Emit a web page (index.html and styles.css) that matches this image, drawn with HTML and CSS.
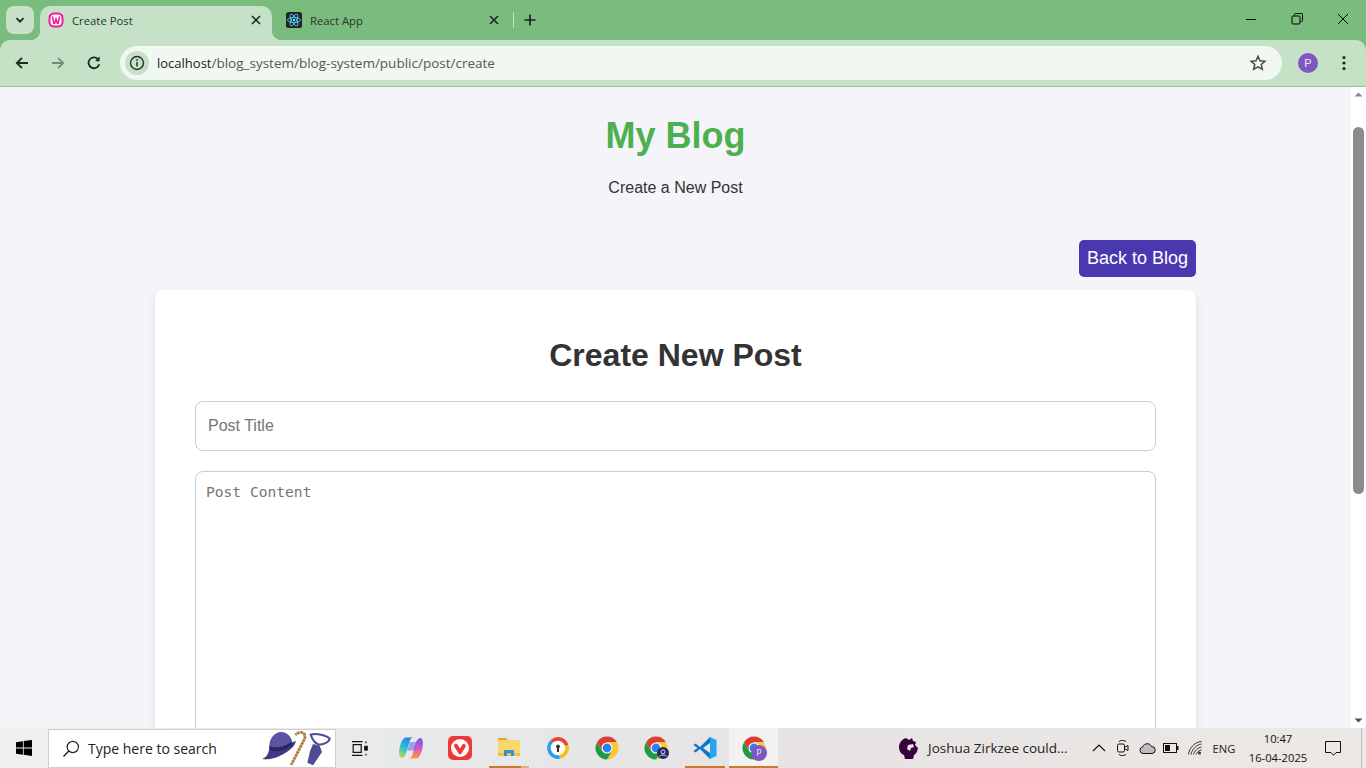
FILE: index.html
```html
<!doctype html>
<html lang="en">
<head>
	<meta charset="utf-8">
	<title>Create Post</title>
	<link rel="stylesheet" href="styles.css">
</head>
<body>
<div class="browser">
	<!-- tabs -->
	<div class="tabstrip">
		<div class="tab-search">
			<svg width="12" height="12" viewBox="0 0 12 12"><path d="M2.5 4.2 6 7.7l3.5-3.5" fill="none" stroke="#1f1f1f" stroke-width="1.7"/></svg>
		</div>
		<div class="tab tab-active">
			<svg class="favicon" width="16" height="16" viewBox="0 0 16 16"><rect x="0.5" y="0.5" width="15" height="15" rx="5.5" fill="#f0189c"/><rect x="2.5" y="2.5" width="11" height="11" rx="3.5" fill="#fff"/><path d="M4.4 4.5 5.8 11.2h.9L8 6.8l1.3 4.4h.9l1.4-6.7" fill="none" stroke="#f0189c" stroke-width="1.5"/></svg>
			<span class="tab-title">Create Post</span>
			<svg class="tab-close" width="10" height="10" viewBox="0 0 10 10"><path d="M1 1l8 8M9 1l-8 8" stroke="#1f1f1f" stroke-width="1.5"/></svg>
		</div>
		<div class="tab tab-other">
			<svg class="favicon" width="16" height="16" viewBox="0 0 16 16"><rect width="16" height="16" rx="2.5" fill="#20232a"/><g fill="none" stroke="#61dafb" stroke-width=".8"><ellipse cx="8" cy="8" rx="6.5" ry="2.6"/><ellipse cx="8" cy="8" rx="6.5" ry="2.6" transform="rotate(60 8 8)"/><ellipse cx="8" cy="8" rx="6.5" ry="2.6" transform="rotate(120 8 8)"/></g><circle cx="8" cy="8" r="1.3" fill="#61dafb"/></svg>
			<span class="tab-title">React App</span>
			<svg class="tab-close" width="10" height="10" viewBox="0 0 10 10"><path d="M1 1l8 8M9 1l-8 8" stroke="#1f1f1f" stroke-width="1.5"/></svg>
		</div>
		<div class="tab-sep"></div>
		<svg class="new-tab" width="12" height="12" viewBox="0 0 12 12"><path d="M6 .5v11M.5 6h11" stroke="#1f1f1f" stroke-width="1.7"/></svg>
		<div class="win-controls">
			<div class="win-btn"><svg width="12" height="12" viewBox="0 0 12 12"><path d="M1 6.5h10" stroke="#000" stroke-width="1"/></svg></div>
			<div class="win-btn"><svg width="12" height="12" viewBox="0 0 12 12"><path d="M3.5 2.500V1.500a1 1 0 0 1 1-1h6a1 1 0 0 1 1 1v6a1 1 0 0 1-1 1H9.5" fill="none" stroke="#000"/><rect x="1" y="3" width="8" height="8" rx="1" fill="none" stroke="#000"/></svg></div>
			<div class="win-btn"><svg width="12" height="12" viewBox="0 0 12 12"><path d="M1 1l10 10M11 1L1 11" stroke="#000" stroke-width="1"/></svg></div>
		</div>
	</div>

	<!-- address bar -->
	<div class="toolbar">
		<svg class="nav-icon" width="16" height="16" viewBox="0 0 16 16"><path d="M14 8H3M8 2.8 2.8 8 8 13.2" fill="none" stroke="#1f2a1f" stroke-width="1.8"/></svg>
		<svg class="nav-icon" width="16" height="16" viewBox="0 0 16 16"><path d="M2 8h11M8 2.8 13.2 8 8 13.2" fill="none" stroke="#76897a" stroke-width="1.8"/></svg>
		<svg class="nav-icon" width="16" height="16" viewBox="0 0 16 16"><path d="M13.2 9.2A5.4 5.4 0 1 1 12 4.2" fill="none" stroke="#1f2a1f" stroke-width="1.8"/><path d="M13.6 1.6v4.6H9z" fill="#1f2a1f"/></svg>
		<div class="omnibox">
			<div class="site-info">
				<svg width="16" height="16" viewBox="0 0 16 16"><circle cx="8" cy="8" r="6.5" fill="none" stroke="#2b2f2b" stroke-width="1.4"/><path d="M8 7v4.400" stroke="#2b2f2b" stroke-width="1.5"/><circle cx="8" cy="4.9" r=".95" fill="#2b2f2b"/></svg>
			</div>
			<div class="url"><span class="url-host">localhost</span>/blog_system/blog-system/public/post/create</div>
			<svg class="star" width="18" height="18" viewBox="0 0 18 18"><path d="M9 2.3l2 4.500 4.900.5-3.700 3.200 1.100 4.800L9 12.800l-4.300 2.500 1.100-4.800L2.100 7.300 7 6.800z" fill="none" stroke="#474c47" stroke-width="1.5"/></svg>
		</div>
		<div class="avatar">P</div>
		<svg class="menu-dots" width="4" height="16" viewBox="0 0 4 16"><circle cx="2" cy="2.5" r="1.6" fill="#1f2a1f"/><circle cx="2" cy="8" r="1.6" fill="#1f2a1f"/><circle cx="2" cy="13.5" r="1.6" fill="#1f2a1f"/></svg>
	</div>

	<div class="viewport">
		<div class="page">
			<header class="site-header">
				<h1>My Blog</h1>
				<p>Create a New Post</p>
			</header>
			<div class="container">
				<div class="actions"><a class="back-btn" href="#">Back to Blog</a></div>
				<div class="card">
					<h2>Create New Post</h2>
					<form>
						<input type="text" class="field" placeholder="Post Title">
						<textarea class="field field-content" placeholder="Post Content"></textarea>
					</form>
				</div>
			</div>
		</div>
		<div class="scrollbar">
			<svg class="sb-arrow" width="15" height="15" viewBox="0 0 15 15"><path d="M3.5 9.5 7.5 5.5l4 4z" fill="#8a8a8a"/></svg>
			<div class="sb-track"><div class="sb-thumb"></div></div>
			<svg class="sb-arrow" width="15" height="15" viewBox="0 0 15 15"><path d="M3.5 5.5 7.5 9.5l4-4z" fill="#505050"/></svg>
		</div>
	</div>

	<!-- windows taskbar -->
	<div class="taskbar">
		<div class="start">
			<svg width="16" height="16" viewBox="0 0 16 16" fill="#000"><path d="M0 2.3 6.900 1.200v6.300H0zM7.700 1.100 16 0v7.500H7.700zM0 8.400h6.900v6.400L0 13.700zM7.700 8.400H16V16l-8.300-1.200z"/></svg>
		</div>
		<div class="search">
			<svg width="18" height="18" viewBox="0 0 18 18"><circle cx="10.8" cy="7" r="5.6" fill="none" stroke="#222" stroke-width="1.2"/><path d="M6.8 11 1.500 16.500" stroke="#222" stroke-width="1.4"/></svg>
			<span class="search-text">Type here to search</span>
			<svg class="search-art" width="77" height="37" viewBox="0 6 231 111">
				<path d="M34 66C30 30 52 10 72 12c20 2 32 20 33 42-22 18-50 22-71 12z" fill="#5b55a5"/>
				<path d="M13 92c15-2 20-22 22-34 17 8 44 2 64-12l14-8c2 20-42 48-73 54-10 2-22 3-27 0z" fill="#3f3a85"/>
				<path d="M35 54c17 8 44 3 65-12l3 9C82 68 55 74 35 65z" fill="#2b2860"/>
				<path d="M100 110 140 32C144 18 132 4 112 20" fill="none" stroke="#cf9e60" stroke-width="8"/>
				<path d="M100 110 140 32C144 18 132 4 112 20" fill="none" stroke="#8f6330" stroke-width="8" stroke-dasharray="3 7"/>
				<path d="M158 20c17-5 47 2 57 12-3 12-20 18-33 18-12-5-20-18-24-30z" fill="none" stroke="#4f4a96" stroke-width="6"/>
				<path d="M165 48l20 5 7 19-27 40-17-8 8-34z" fill="#4f4a96"/>
			</svg>
		</div>
		<div class="task-icons">
			<div class="task-item">
				<svg class="task-view" width="16" height="15" viewBox="0 0 16 15" fill="none" stroke="#111" stroke-width="1.2"><path d="M0 .6h10.500M0 14.400h10.500"/><rect x="1.2" y="3.6" width="8" height="7.800"/><path d="M14 .5v1.800M14 12.700v1.800"/><rect x="12.8" y="5.4" width="2.4" height="3.6" fill="#111"/></svg>
			</div>
			<div class="task-item">
				<svg width="24" height="22" viewBox="0 0 24 22">
					<defs>
						<linearGradient id="cp-left" x1="0.7" y1="0" x2="0.2" y2="1"><stop offset="0" stop-color="#1f7ff0"/><stop offset=".55" stop-color="#2fc2d0"/><stop offset="1" stop-color="#b8dc45"/></linearGradient>
						<linearGradient id="cp-right" x1="0.6" y1="0" x2="0.4" y2="1"><stop offset="0" stop-color="#6f5cf0"/><stop offset=".5" stop-color="#e455b8"/><stop offset="1" stop-color="#f8a13c"/></linearGradient>
					</defs>
					<path d="M7 .5h8c-2 0-3.500 1-4.200 3.200L7.500 15C6.500 18.500 5 21 2.800 21 1 21 0 19 0 15.500 0 11 1.500 6.500 3 3.800 4 1.800 5.300.5 7 .5z" fill="url(#cp-left)"/>
					<path d="M17 21.500H9c2 0 3.500-1 4.200-3.200L16.500 7C17.500 3.500 19 1 21.200 1 23 1 24 3 24 6.500 24 11 22.500 15.500 21 18.200 20 20.200 18.700 21.500 17 21.500z" fill="url(#cp-right)"/>
					<path d="M10.800 5 8.300 13.500h8L18 5z" fill="#5a62e8" opacity=".55"/>
				</svg>
			</div>
			<div class="task-item">
				<svg width="24" height="24" viewBox="0 0 24 24"><rect width="24" height="24" rx="5" fill="#ef3939"/><circle cx="12" cy="12" r="9" fill="#fff"/><path d="M6.500 8.300c1-1 2.500-.8 3.200.4L12 12.600l1.600-2.900c.5-1 1.200-1.700 2.300-1.700 1.500 0 2.400 1.700 1.600 3l-4.300 6.700c-.6 1-1.800 1-2.400 0L6.400 11c-.5-.9-.6-2 .1-2.700z" fill="#ef3939"/></svg>
			</div>
			<div class="task-item task-files task-running">
				<svg width="22" height="20" viewBox="0 0 22 20"><path d="M0 1a1 1 0 0 1 1-1h7l2 2h-10z" fill="#e8a92c"/><rect y="2" width="22" height="15" fill="#f9d769"/><rect y="15" width="22" height="3" fill="#f0c04d"/><path d="M7 12h8a1 1 0 0 1 1 1v5h-3v-3H9v3H6v-5a1 1 0 0 1 1-1z" fill="#2f8fdc"/></svg>
			</div>
			<div class="task-item">
				<svg width="24" height="24" viewBox="0 0 24 24"><circle cx="12" cy="12" r="11" fill="#fff"/><path d="M12 1a11 11 0 0 1 10.500 8l-3.500 1A7.500 7.500 0 0 0 7 6.500L4.500 4A11 11 0 0 1 12 1z" fill="#ea4335"/><path d="M22.500 9A11 11 0 0 1 14 22.800l-1-3.500A7.500 7.500 0 0 0 19 10z" fill="#f9bc15"/><path d="M4.500 4A11 11 0 0 0 14 22.800l-1-3.500A7.500 7.500 0 0 1 7 6.500z" fill="#2b9fe8"/><path d="M12 8.500a2 2 0 0 1 1 3.700V16h-2v-3.800a2 2 0 0 1 1-3.700z" fill="#333"/></svg>
			</div>
			<div class="task-item">
				<svg width="24" height="24" viewBox="0 0 24 24"><use href="#chrome-logo"/></svg>
			</div>
			<div class="task-item">
				<svg width="24" height="24" viewBox="0 0 24 24"><use href="#chrome-logo"/></svg>
				<svg class="task-badge" width="12" height="12" viewBox="0 0 12 12"><circle cx="6" cy="6" r="6" fill="#25265e"/><circle cx="6" cy="4.800" r="2" fill="none" stroke="#cfd3f5" stroke-width="1"/><path d="M2.500 9.500c1-2 6-2 7 0" fill="none" stroke="#cfd3f5" stroke-width="1"/></svg>
			</div>
			<div class="task-item task-running">
				<svg width="24" height="24" viewBox="0 0 24 24"><path d="M17 1 23.500 4v16L17 23z" fill="#23a5f0"/><path d="M17 1 7 11 2.500 7.500.5 9 4.500 12 .5 15l2 1.500L7 13 17 23v-6L10 12l7-5z" fill="#0a78c7"/></svg>
			</div>
			<div class="task-item task-active task-running">
				<svg width="24" height="24" viewBox="0 0 24 24"><use href="#chrome-logo"/></svg>
				<div class="task-avatar">P</div>
			</div>
		</div>
		<div class="news">
			<svg width="20" height="23" viewBox="0 0 20 23"><path d="M7 1l3 2 3-2 1 3 3 1-1 3 3 3c-1 4-2 6-4 7l-1 4H6l-1-4c-3-1-5-4-5-8s3-8 7-9z" fill="#38003c"/><path d="M9 8l5-1 1 3-3 1-1 3-3-2z" fill="#e8e4ea"/></svg>
			<span>Joshua Zirkzee could...</span>
		</div>
		<div class="tray">
			<div class="tray-icon"><svg width="14" height="8" viewBox="0 0 14 8"><path d="M1 7l6-6 6 6" fill="none" stroke="#111" stroke-width="1.2"/></svg></div>
			<div class="tray-icon"><svg width="12" height="18" viewBox="0 0 12 18" fill="none" stroke="#111" stroke-width="1"><path d="M2 2.500c2-1.500 5-1.500 7 0M2 15.500c2 1.500 5 1.500 7 0"/><rect x=".5" y="5" width="7" height="8" rx="1.5"/><path d="M8 8l3-1.500v5L8 10"/></svg></div>
			<div class="tray-icon"><svg width="17" height="12" viewBox="0 0 17 12"><path d="M4 11.500a3.300 3.300 0 0 1-.5-6.500C5 1 11 .5 12.500 4.500a3.500 3.500 0 0 1 .5 7z" fill="#bdbdbd" stroke="#111" stroke-width="1"/></svg></div>
			<div class="tray-icon"><svg width="16" height="10" viewBox="0 0 16 10"><rect x=".5" y=".5" width="13" height="9" fill="none" stroke="#111"/><rect x="2" y="2" width="5" height="6" fill="#111"/><rect x="14" y="3" width="1.5" height="4" fill="#111"/></svg></div>
			<div class="tray-icon"><svg width="14" height="14" viewBox="0 0 14 14" fill="none" stroke="#333" stroke-width="1"><path d="M.5 13.500C1 7 7 1 13.500.5M3 13.500C3.500 9 8.500 3.500 13.500 3M5.500 13.500C6 10.500 10 6.500 13.500 6"/><path d="M8 13.500C8.500 12 11 9 13.500 9"/><circle cx="11.5" cy="12" r="1.5" fill="#333" stroke="none"/></svg></div>
			<span class="lang">ENG</span>
			<div class="clock"><span>10:47</span><span>16-04-2025</span></div>
			<div class="notif"><svg width="16" height="15" viewBox="0 0 16 15"><path d="M.5.500h15v11h-4.500L8.500 14.300 6 11.500H.5z" fill="none" stroke="#111"/></svg></div>
			<div class="show-desktop"></div>
		</div>
	</div>
</div>

<svg class="defs" width="0" height="0">
	<defs>
		<g id="chrome-logo">
			<path d="M2.040 6.250A11.500 11.500 0 0 1 21.960 6.250H12L7 15z" fill="#de3e31"/>
			<path d="M21.960 6.250A11.500 11.500 0 0 1 12 23.500L17 15 12 6.250z" fill="#fcc934"/>
			<path d="M12 23.500A11.500 11.500 0 0 1 2.040 6.250L7 15H17z" fill="#1f9a46"/>
			<circle cx="12" cy="12" r="5.500" fill="#fff"/>
			<circle cx="12" cy="12" r="4.400" fill="#2f80ed"/>
		</g>
	</defs>
</svg>
</body>
</html>
```

FILE: styles.css
```css
* { box-sizing: border-box; }

html, body {
	margin: 0;
	height: 100%;
	overflow: hidden;
}

body { font-family: "Liberation Sans", Arial, sans-serif; }

.defs { position: absolute; }

.browser {
	display: flex;
	flex-direction: column;
	height: 768px;
	background: #7abc7e;
}

/* The tab strip */
.tabstrip {
	display: flex;
	align-items: flex-end;
	height: 40px;
	flex: none;
	font-family: "Open Sans", "Noto Sans", sans-serif;
	font-size: 11.3px;
	color: #2a352b;
}

.tab-search {
	display: flex;
	align-items: center;
	justify-content: center;
	width: 28px;
	height: 28px;
	margin: 0 6px 6px 6px;
	border-radius: 8px;
	background: #c5e2c6;
}

.tab {
	display: flex;
	align-items: center;
	width: 232px;
	height: 34px;
	padding: 0 10px 6px 8px;
}

.tab-active {
	position: relative;
	background: #c5e2c6;
	border-radius: 10px 10px 0 0;
	z-index: 1;
}

.tab-active:before, .tab-active:after {
	content: "";
	position: absolute;
	bottom: 0;
	width: 10px;
	height: 10px;
}

.tab-active:before {
	left: -10px;
	background: radial-gradient(circle at 0 0, transparent 10px, #c5e2c6 10.5px);
}

.tab-active:after {
	right: -10px;
	background: radial-gradient(circle at 100% 0, transparent 10px, #c5e2c6 10.5px);
}

.tab-title {
	flex: 1;
	margin-left: 8px;
}

.tab-close { margin-right: 1px; }

.tab-other { width: 240px; padding-left: 14px; }

.tab-other .tab-close { margin-right: 3px; }

.tab-sep {
	width: 1px;
	height: 16px;
	margin: 0 0 12px 1px;
	background: #c5e2c6;
}

.new-tab { margin: 0 0 14px 10px; }

.win-controls {
	display: flex;
	align-self: stretch;
	margin-left: auto;
}

.win-btn {
	display: flex;
	align-items: center;
	justify-content: center;
	width: 46px;
	padding-bottom: 2px;
}

/* The toolbar with the address bar */
.toolbar {
	display: flex;
	align-items: center;
	height: 47px;
	flex: none;
	padding: 0 0 1px 14px;
	background: #c5e2c6;
	border-radius: 10px 10px 0 0;
	border-bottom: 1px solid #a3b9a5;
}

.nav-icon { margin-right: 20px; }

.nav-icon:nth-child(3) { margin-right: 18px; }

.omnibox {
	display: flex;
	align-items: center;
	width: 1162px;
	height: 34px;
	padding: 0 15px 0 5px;
	border-radius: 17px;
	background: #f1f7f1;
}

.site-info {
	display: flex;
	align-items: center;
	justify-content: center;
	width: 24px;
	height: 24px;
	border-radius: 50%;
	background: #c5e2c6;
}

.url {
	flex: 1;
	margin-left: 8px;
	font-family: "Open Sans", "Noto Sans", sans-serif;
	font-size: 13.5px;
	color: #4d5e50;
}

.url-host { color: #1c241d; font-size: 13px; }

.avatar {
	display: flex;
	align-items: center;
	justify-content: center;
	width: 20px;
	height: 20px;
	margin-left: 16px;
	border-radius: 50%;
	background: #7e57c2;
	color: #f1e8fb;
	font-size: 11px;
}

.menu-dots { margin-left: 24px; }

/* Page in the browser */
.viewport {
	display: flex;
	flex: 1;
	min-height: 0;
	background: #f4f4f9;
}

.page {
	flex: 1;
	min-width: 0;
	overflow: hidden;
	color: #333;
}

.site-header {
	padding-top: 28px;
	text-align: center;
}

.site-header h1 {
	margin: 0;
	font-size: 36px;
	line-height: 42px;
	color: #4caf50;
}

.site-header p {
	margin: 22px 0 0;
	font-size: 16px;
	line-height: 18px;
}

.container {
	width: 1041px;
	margin: 43px auto 0;
}

.actions {
	display: flex;
	justify-content: flex-end;
	margin-bottom: 13px;
}

.back-btn {
	height: 37px;
	padding: 0 8px;
	border-radius: 5px;
	background: #4a38b0;
	color: #fff;
	font-size: 18px;
	line-height: 36px;
	text-decoration: none;
}

.card {
	height: 600px;
	padding: 47px 40px 0;
	border-radius: 8px;
	background: #fff;
	box-shadow: 0 4px 8px rgba(0, 0, 0, 0.1);
}

.card h2 {
	margin: 0 0 27px;
	font-size: 32px;
	line-height: 37px;
	text-align: center;
}

.field {
	display: block;
	width: 100%;
	border: 1px solid #ccc;
	border-radius: 8px;
	background: #fff;
	outline: none;
}

input.field {
	height: 50px;
	padding: 0 12px;
	font-family: "Liberation Sans", Arial, sans-serif;
	font-size: 16px;
}

.field-content {
	height: 400px;
	margin-top: 20px;
	padding: 11px 10px;
	resize: none;
	font-family: "DejaVu Sans Mono", monospace;
	font-size: 14.6px;
}

.field::placeholder { color: #757575; }

.scrollbar {
	display: flex;
	flex-direction: column;
	width: 15px;
	flex: none;
	background: #fff;
}

.sb-track {
	flex: 1;
	padding: 25px 1px 0;
}

.sb-thumb {
	width: 11px;
	height: 367px;
	margin: 0 auto;
	border-radius: 6px;
	background: #8b8b8b;
}

/* Windows taskbar */
.taskbar {
	display: flex;
	align-items: center;
	height: 40px;
	flex: none;
	background: linear-gradient(90deg, #eef0f0 0%, #e8e9eb 30%, #e6e3e2 60%, #ebe8e6 100%);
	color: #111;
	font-family: "Open Sans", "Noto Sans", sans-serif;
}

.start {
	display: flex;
	align-items: center;
	justify-content: center;
	width: 48px;
	height: 100%;
}

.search {
	display: flex;
	align-items: center;
	width: 288px;
	height: 39px;
	margin-top: 1px;
	padding-left: 13px;
	border: 1px solid #cfcfcf;
	background: #fff;
}

.search-text {
	margin-left: 8px;
	font-size: 14px;
	color: #222;
}

.search-art { margin-left: auto; }

.task-icons {
	display: flex;
	height: 100%;
	margin-left: 1px;
}

.task-item {
	position: relative;
	display: flex;
	align-items: center;
	justify-content: center;
	width: 49px;
	height: 100%;
}

.task-view { margin-right: 3px; }

.task-running:after {
	content: "";
	position: absolute;
	left: 5px;
	right: 4px;
	bottom: 0;
	height: 2px;
	background: #c87a2c;
}

.task-files:after {
	background: linear-gradient(90deg, #c87a2c 0, #c87a2c 80%, #ddb081 80%);
}

.task-active { background: #f3f2f1; }

.task-active:after { left: 0; right: 0; }

.task-badge {
	position: absolute;
	left: 26px;
	bottom: 9px;
}

.task-avatar {
	position: absolute;
	left: 22px;
	bottom: 7px;
	width: 16px;
	height: 16px;
	border-radius: 50%;
	background: #7e57c2;
	color: #eee;
	font-size: 9px;
	line-height: 16px;
	text-align: center;
}

.news {
	display: flex;
	align-items: center;
	gap: 9px;
	margin-left: 121px;
	font-size: 13.5px;
	color: #222;
}

.tray {
	display: flex;
	align-items: center;
	margin-left: auto;
	height: 100%;
	font-size: 11.2px;
}

.tray-icon {
	display: flex;
	align-items: center;
	justify-content: center;
	width: 24px;
}

.lang {
	width: 34px;
	text-align: center;
	color: #222;
}

.clock {
	display: flex;
	flex-direction: column;
	align-items: center;
	gap: 4px;
	width: 74px;
	line-height: 15px;
}

.notif {
	display: flex;
	justify-content: center;
	width: 36px;
}

.show-desktop {
	width: 15px;
	height: 100%;
	background: linear-gradient(90deg, transparent 10px, #b9b9b9 10px, #b9b9b9 11px, transparent 11px);
}
```
